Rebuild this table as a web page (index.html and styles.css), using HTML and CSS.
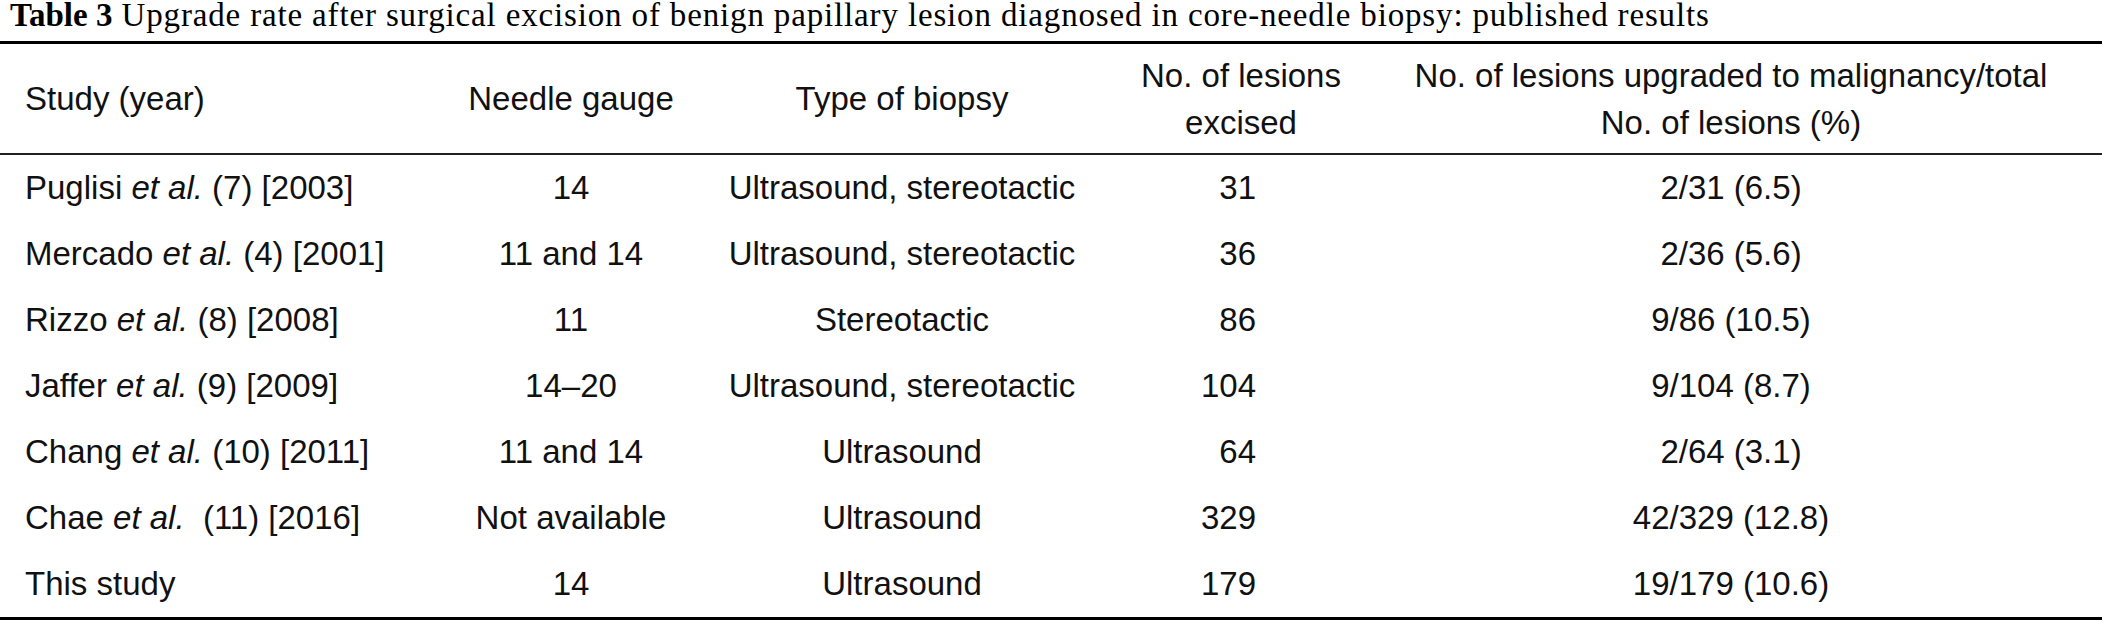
FILE: index.html
```html
<!DOCTYPE html>
<html lang="en">
<head>
<meta charset="utf-8">
<title>Table 3</title>
<link rel="stylesheet" href="styles.css">
</head>
<body>
<div class="figure">
  <div class="caption"><b>Table 3</b> Upgrade rate after surgical excision of benign papillary lesion diagnosed in core-needle biopsy: published results</div>
  <div class="table">
    <div class="row head">
      <div class="cell c-study"><span>Study (year)</span></div>
      <div class="cell c-mid"><span>Needle gauge</span></div>
      <div class="cell c-mid"><span>Type of biopsy</span></div>
      <div class="cell c-mid"><span>No. of lesions<br>excised</span></div>
      <div class="cell c-mid"><span>No. of lesions upgraded to malignancy/total<br>No. of lesions (%)</span></div>
    </div>
    <div class="row">
      <div class="cell c-study"><span>Puglisi <i>et al.</i> (7) [2003]</span></div>
      <div class="cell c-mid"><span>14</span></div>
      <div class="cell c-mid"><span>Ultrasound, stereotactic</span></div>
      <div class="cell c-num"><span>31</span></div>
      <div class="cell c-mid"><span>2/31 (6.5)</span></div>
    </div>
    <div class="row">
      <div class="cell c-study"><span>Mercado <i>et al.</i> (4) [2001]</span></div>
      <div class="cell c-mid"><span>11 and 14</span></div>
      <div class="cell c-mid"><span>Ultrasound, stereotactic</span></div>
      <div class="cell c-num"><span>36</span></div>
      <div class="cell c-mid"><span>2/36 (5.6)</span></div>
    </div>
    <div class="row">
      <div class="cell c-study"><span>Rizzo <i>et al.</i> (8) [2008]</span></div>
      <div class="cell c-mid"><span>11</span></div>
      <div class="cell c-mid"><span>Stereotactic</span></div>
      <div class="cell c-num"><span>86</span></div>
      <div class="cell c-mid"><span>9/86 (10.5)</span></div>
    </div>
    <div class="row">
      <div class="cell c-study"><span>Jaffer <i>et al.</i> (9) [2009]</span></div>
      <div class="cell c-mid"><span>14–20</span></div>
      <div class="cell c-mid"><span>Ultrasound, stereotactic</span></div>
      <div class="cell c-num"><span>104</span></div>
      <div class="cell c-mid"><span>9/104 (8.7)</span></div>
    </div>
    <div class="row">
      <div class="cell c-study"><span>Chang <i>et al.</i> (10) [2011]</span></div>
      <div class="cell c-mid"><span>11 and 14</span></div>
      <div class="cell c-mid"><span>Ultrasound</span></div>
      <div class="cell c-num"><span>64</span></div>
      <div class="cell c-mid"><span>2/64 (3.1)</span></div>
    </div>
    <div class="row">
      <div class="cell c-study"><span>Chae <i>et al.</i>&nbsp; (11) [2016]</span></div>
      <div class="cell c-mid"><span>Not available</span></div>
      <div class="cell c-mid"><span>Ultrasound</span></div>
      <div class="cell c-num"><span>329</span></div>
      <div class="cell c-mid"><span>42/329 (12.8)</span></div>
    </div>
    <div class="row last">
      <div class="cell c-study"><span>This study</span></div>
      <div class="cell c-mid"><span>14</span></div>
      <div class="cell c-mid"><span>Ultrasound</span></div>
      <div class="cell c-num"><span>179</span></div>
      <div class="cell c-mid"><span>19/179 (10.6)</span></div>
    </div>
  </div>
</div>
</body>
</html>
```

FILE: styles.css
```css
html, body {
  margin: 0;
  padding: 0;
  background: #ffffff;
  color: #000000;
}

.figure {
  width: 2102px;
}

.caption {
  font-family: "Liberation Serif", "Times New Roman", serif;
  font-size: 33px;
  letter-spacing: 0.85px;
  line-height: 30px;
  padding-left: 10px;
  padding-bottom: 11px;
  white-space: nowrap;
}

.caption b {
  font-weight: bold;
  letter-spacing: 0;
}

.table {
  border-top: 3px solid #000;
  border-bottom: 3px solid #000;
  font-family: "Liberation Sans", Arial, Helvetica, sans-serif;
  font-size: 33px;
  color: #111;
}

.row {
  display: grid;
  grid-template-columns: 460px 222px 440px 238px 1fr;
  height: 66px;
}

.row.head {
  height: 109px;
  border-bottom: 2px solid #222;
}

.cell {
  display: flex;
  align-items: center;
  line-height: 40px;
  white-space: nowrap;
}

.head .cell {
  line-height: 47px;
}

.c-study {
  padding-left: 25px;
}

.c-mid {
  justify-content: center;
  text-align: center;
}

.c-num {
  justify-content: flex-end;
  padding-right: 104px;
}

i {
  font-style: italic;
}
```
